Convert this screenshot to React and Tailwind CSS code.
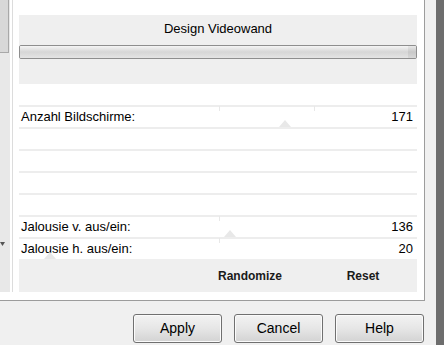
import React from "react";

// faint slider thumb (pointing up) sitting on the bottom of a row
function Thumb({ left }) {
  return (
    <svg
      className="absolute bottom-0"
      style={{ left }}
      width="12"
      height="8"
      viewBox="0 0 12 8"
    >
      <path d="M0 8 L6 1 L12 8 Z" fill="#e8e8e8" />
    </svg>
  );
}

function Tick({ left }) {
  return (
    <div
      className="absolute top-[1px] w-px h-[5px] bg-[#e8e8e8]"
      style={{ left }}
    />
  );
}

function Row({ label, value, thumb, ticks = [] }) {
  return (
    <div className="relative flex flex-col">
      <div className="h-[2px] bg-[#ededed]" />
      <div className="h-[20px] flex items-center justify-between px-[2px] pr-[4px]">
        <span>{label}</span>
        <span>{value}</span>
      </div>
      {ticks.map((t) => (
        <Tick key={t} left={t} />
      ))}
      {thumb !== undefined && <Thumb left={thumb} />}
    </div>
  );
}

function DlgButton({ children }) {
  return (
    <button className="w-[89px] h-[29px] rounded-[3px] border border-[#707070] bg-gradient-to-b from-[#f3f3f3] via-[#e6e6e6] to-[#d3d3d3] text-[14px] text-black shadow-[inset_0_0_0_1px_#fbfbfb]">
      {children}
    </button>
  );
}

export default function App() {
  return (
    <div className="w-[444px] h-[345px] flex bg-[#f0f0f0] overflow-hidden font-['Liberation_Sans',Arial,sans-serif] text-[13px] text-black">
      <div className="w-[436px] flex flex-col">
        {/* upper frame */}
        <div className="h-[301px] flex">
          <div className="w-[425px] h-[301px] flex bg-white border-r border-b border-[#9c9c9c]">
            {/* cut-off scroll strip on the left */}
            <div className="w-[10px] h-[292px] flex flex-col bg-[#e8e8e8]">
              <div className="h-[53px] w-[9px] bg-[#d8d8d8] border-r border-b border-[#a8a8a8]" />
              <div className="h-[189px]" />
              <svg width="6" height="5" viewBox="0 0 6 5">
                <path d="M0 0 L5 0 L2.5 4 Z" fill="#555" />
              </svg>
            </div>
            <div className="w-[2px]" />
            <div className="w-px h-[292px] bg-[#dcdcdc]" />

            {/* panel content */}
            <div className="flex-1 flex flex-col pt-[15px] pl-[6px] pr-[7px]">
              <div className="h-[69px] bg-[#efefef] flex flex-col items-center pt-[6px]">
                <span className="leading-[16px]">Design Videowand</span>
                <div className="mt-[8px] w-full h-[14px] flex rounded-[2px] border border-[#8e8e8e] overflow-hidden">
                  <div className="flex-1 bg-gradient-to-b from-[#f5f5f5] via-[#d6d6d6] to-[#e4e4e4]" />
                  <div className="w-[8px] bg-gradient-to-b from-[#e8e8e8] via-[#c8c8c8] to-[#d8d8d8]" />
                </div>
              </div>

              <div className="h-[21px]" />

              <Row
                label="Anzahl Bildschirme:"
                value="171"
                thumb={260}
                ticks={[200, 295]}
              />
              <Row />
              <Row />
              <Row />
              <Row />
              <Row label="Jalousie v. aus/ein:" value="136" thumb={205} ticks={[200]} />
              <Row label="Jalousie h. aus/ein:" value="20" thumb={25} ticks={[200]} />

              <div className="h-[33px] bg-[#efefef] flex items-center justify-end pr-[4px] gap-[13px] text-[12px] font-bold text-[#1a1a1a]">
                <span className="w-[100px] text-center">Randomize</span>
                <span className="w-[100px] text-center">Reset</span>
              </div>
            </div>
          </div>
          <div className="flex-1" />
        </div>

        {/* dialog buttons */}
        <div className="flex-1 flex pt-[13px] pl-[133px] gap-[12px]">
          <DlgButton>Apply</DlgButton>
          <DlgButton>Cancel</DlgButton>
          <DlgButton>Help</DlgButton>
        </div>
      </div>
      <div className="flex-1 bg-[#6d6d6d]" />
    </div>
  );
}
